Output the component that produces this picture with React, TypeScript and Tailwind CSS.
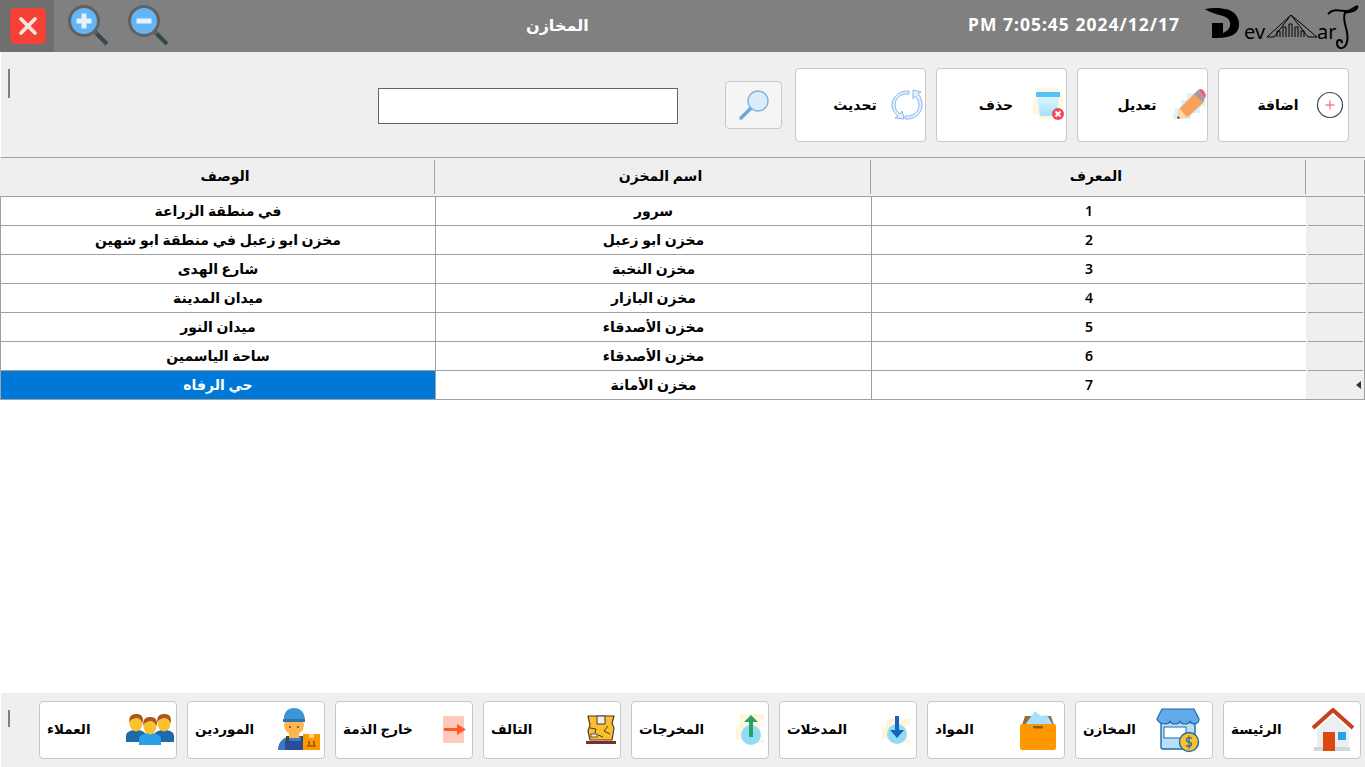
import type { ReactNode } from 'react';
import { X } from 'lucide-react';

const rows = [
  { id: 1, name: 'سرور', desc: 'في منطقة الزراعة' },
  { id: 2, name: 'مخزن ابو زعبل', desc: 'مخزن ابو زعبل في منطقة ابو شهين' },
  { id: 3, name: 'مخزن النخبة', desc: 'شارع الهدى' },
  { id: 4, name: 'مخزن البازار', desc: 'ميدان المدينة' },
  { id: 5, name: 'مخزن الأصدقاء', desc: 'ميدان النور' },
  { id: 6, name: 'مخزن الأصدقاء', desc: 'ساحة الياسمين' },
  { id: 7, name: 'مخزن الأمانة', desc: 'حي الرفاه' },
];

const ZoomIcon = ({ minus }: { minus?: boolean }) => (
  <svg width="42" height="42" viewBox="0 0 42 42">
    <line x1="27" y1="27" x2="39" y2="39" stroke="#37474f" strokeWidth="4" />
    <line x1="25" y1="25" x2="29" y2="29" stroke="#616161" strokeWidth="3" />
    <circle cx="16" cy="16" r="14.5" fill="#64b5f6" stroke="#616161" strokeWidth="3" />
    <rect x="8.5" y="13.5" width="15" height="5" fill="#e3f2fd" />
    {!minus && <rect x="13.5" y="8.5" width="5" height="15" fill="#e3f2fd" />}
  </svg>
);

const Logo = () => (
  <div className="relative h-[52px] w-[160px] shrink-0 text-black" dir="ltr">
    <svg width="160" height="52" viewBox="0 0 160 52" className="absolute inset-0">
      <path d="M0 9 C12 7 26 8 31 15 C36 22 35 31 28 35 C22 38 14 38 7 38 L7 23 L18 23 L18 33 C24 31 27 25 24 20 C20 14 10 16 0 9 Z" fill="#000" />
      <path d="M62 37 H69 L86 15 L103 37 H112 L86 15 L62 37" fill="none" stroke="#000" strokeWidth="1" />
      <path d="M72 37 V31 H75 V37 M78 37 V27 H81 V37 M84 37 V24 H87 V37 M90 37 V27 H93 V37 M96 37 V31 H99 V37" fill="none" stroke="#000" strokeWidth="1" />
      <path d="M123 14 C130 7 137 12 143 11 C148 10 154 3 152 8 C150 12 143 12 140 13 C136 22 145 30 142 42 C140 50 132 50 132 43 C132 39 137 39 137 43" fill="none" stroke="#000" strokeWidth="2" />
    </svg>
    <span className="absolute left-[39px] top-[22px] text-[20px] font-normal leading-none">ev</span>
    <span className="absolute left-[112px] top-[22px] text-[20px] font-normal leading-none">ar</span>
  </div>
);

const PlusCircleIcon = () => (
  <svg width="28" height="28" viewBox="0 0 28 28">
    <circle cx="14" cy="14" r="12.5" fill="none" stroke="#3c4454" strokeWidth="1.2" />
    <path d="M14 9.5 V18.5 M9.5 14 H18.5" stroke="#f77f8e" strokeWidth="1.4" />
  </svg>
);

const PencilIcon = () => (
  <svg width="34" height="34" viewBox="0 0 34 34">
    <path d="M3 20 H9 V12 H15 V5 H28 V2 H33 V18 H28 V25 H19 V31 H1 V26 H3 Z" fill="#d8f3fb" />
    <path d="M8 20 L23 5 L32 14 L16 29 L5 31 Z" fill="#f9a05c" />
    <path d="M26 2 Q29 0 31 2 L33 5 Q35 8 33 10 L26 2 Z" fill="#ef5f77" />
    <path d="M22 6 L26 2 L33 10 L31 14 Z" fill="#9e9e9e" />
    <path d="M5 31 L8 21 L15 29 Z" fill="#fcd9a4" />
    <path d="M5 31 L6 28 L8 30 Z" fill="#444" />
  </svg>
);

const TrashIcon = () => (
  <svg width="32" height="36" viewBox="0 0 32 36">
    <path d="M5 1 H26 V8 H31 V24 H27 V32 H7 V28 H1 V10 H5 Z" fill="#fff6df" />
    <path d="M5 8 H27 L25 29 H8 Z" fill="url(#trashFill)" />
    <rect x="4" y="5" width="24" height="5" fill="#4fc3f7" />
    <circle cx="26" cy="27" r="6" fill="#f0475e" />
    <path d="M23.5 24.5 L28.5 29.5 M28.5 24.5 L23.5 29.5" stroke="#fff" strokeWidth="1.8" />
    <defs>
      <linearGradient id="trashFill" x1="0" y1="0" x2="0" y2="1">
        <stop offset="0" stopColor="#e3f6fe" />
        <stop offset="1" stopColor="#a5e2fb" />
      </linearGradient>
    </defs>
  </svg>
);

const RefreshIcon = () => (
  <svg width="32" height="32" viewBox="0 0 32 32" fill="#e3f1fc" stroke="#86b7e6" strokeWidth="1">
    <path d="M18 2 L18 5 C10 4 4 9 4 16 C4 20 6 23 9 25 L11 22 L13 30 L4 29 L7 27 C3 24 1 20 1 16 C1 8 9 1 18 2 Z" />
    <path d="M22 1 L30 3 L27 5 C30 8 31 12 31 16 C31 24 24 31 14 30 L14 27 C22 28 28 23 28 16 C28 12 26 9 24 7 L22 10 Z" />
  </svg>
);

const SearchIcon = () => (
  <svg width="32" height="32" viewBox="0 0 32 32">
    <line x1="3" y1="29" x2="13" y2="19" stroke="#6fa8dc" strokeWidth="3.6" strokeLinecap="round" />
    <circle cx="20" cy="12" r="10" fill="#dcecfb" stroke="#7fb2e5" strokeWidth="1.4" />
  </svg>
);

const HomeIcon = () => (
  <svg width="44" height="44" viewBox="0 0 44 44">
    <path d="M6 22 L22 7 L38 22 V41 H6 Z" fill="#eceff1" />
    <rect x="3" y="39" width="36" height="4" fill="#cfd8dc" />
    <path d="M2 20 L22 2 L42 20" fill="none" stroke="#c6421a" strokeWidth="4" />
    <rect x="12" y="24" width="12" height="19" fill="#dd4a10" />
    <rect x="27" y="24" width="8" height="8" fill="#29a0e0" />
  </svg>
);

const StoreIcon = () => (
  <svg width="44" height="46" viewBox="0 0 44 46">
    <rect x="5" y="14" width="34" height="28" rx="2" fill="#bbdefb" stroke="#1c6ca8" strokeWidth="1.4" />
    <rect x="8" y="20" width="22" height="11" fill="#fff" stroke="#1c6ca8" strokeWidth="1" />
    <path d="M6 2 H38 L43 12 C43 18 35 18 34 14 C33 18 25 18 24 14 C23 18 15 18 14 14 C13 18 3 18 1 12 Z" fill="#64a9ea" stroke="#1c6ca8" strokeWidth="1.2" />
    <circle cx="33" cy="35" r="9.5" fill="#fbc02d" stroke="#1c6ca8" strokeWidth="1.4" />
    <path d="M36 31.5 Q33 29.5 30.5 32 Q30 34.5 33 35 Q36 35.5 35.5 38 Q33 40.5 30 38.5 M33 28.5 V41.5" fill="none" stroke="#1c6ca8" strokeWidth="1.2" />
  </svg>
);

const BoxIcon = () => (
  <svg width="36" height="40" viewBox="0 0 36 40">
    <path d="M2 15 L5 6 H31 L34 15 Z" fill="#8d6e3f" />
    <path d="M5 15 L15 1 L21 6 L27 5 L33 15 Z" fill="#a8e0fb" />
    <rect x="0" y="14" width="36" height="26" rx="2" fill="#ff9800" />
    <rect x="13" y="16" width="10" height="2.5" rx="1" fill="#8d5a1c" />
  </svg>
);

const InIcon = () => (
  <svg width="32" height="34" viewBox="0 0 32 34">
    <path d="M6 6 H30 V12 H26 V26 H30 V30 H12 V26 H2 V14 H6 Z" fill="#fff5dc" />
    <circle cx="17" cy="21" r="10" fill="#90dcf5" />
    <path d="M15 3 H19 V17 H24 L17 25 L10 17 H15 Z" fill="#1565c0" />
  </svg>
);

const OutIcon = () => (
  <svg width="32" height="34" viewBox="0 0 32 34">
    <path d="M6 1 H30 V8 H26 V26 H30 V30 H12 V26 H2 V14 H6 Z" fill="#fff5dc" />
    <circle cx="17" cy="22" r="10" fill="#90dcf5" />
    <path d="M15 24 V9 H10 L17 2 L24 9 H19 V24 Z" fill="#26a269" />
  </svg>
);

const DamagedIcon = () => (
  <svg width="30" height="30" viewBox="0 0 30 30">
    <path d="M2 1 H28 L26 8 L28 13 L26 25 H4 L2 16 L4 10 Z" fill="#fbc02d" stroke="#4e3a2a" strokeWidth="1.2" />
    <rect x="11" y="1" width="8" height="8" fill="#eee" stroke="#4e3a2a" strokeWidth="1" />
    <path d="M4 13 L10 14 L9 18 M22 11 L18 16 L24 19 M12 20 L17 22" fill="none" stroke="#4e3a2a" strokeWidth="1" />
    <rect x="5" y="19" width="6" height="3" fill="#eee" stroke="#4e3a2a" strokeWidth="0.8" />
    <rect x="0" y="26" width="30" height="3" fill="#7a2e2e" />
  </svg>
);

const ExitIcon = () => (
  <svg width="24" height="28" viewBox="0 0 24 28">
    <rect x="0" y="0" width="21" height="27" rx="1.5" fill="#ffc9bb" />
    <path d="M1 12 H14 V8 L23 13.5 L14 19 V15 H1 Z" fill="#ff5a26" />
  </svg>
);

const SupplierIcon = () => (
  <svg width="42" height="44" viewBox="0 0 42 44">
    <path d="M0 42 C0 33 6 30 11 28 H23 C28 30 32 33 33 42 Z" fill="#3878c4" />
    <rect x="7" y="33" width="20" height="9" fill="#2b4c9b" />
    <rect x="8" y="28" width="3" height="7" fill="#37474f" />
    <rect x="23" y="28" width="3" height="7" fill="#37474f" />
    <circle cx="16" cy="17" r="10" fill="#ffb74d" />
    <rect x="11" y="25" width="10" height="5" fill="#ffb74d" />
    <path d="M6 13 C5 4 10 0 16 0 C23 0 27 5 27 13 Z" fill="#3d95d9" />
    <rect x="5" y="11" width="22" height="3" fill="#2a74b5" />
    <circle cx="12" cy="19" r="1" fill="#5d4037" />
    <circle cx="20" cy="19" r="1" fill="#5d4037" />
    <rect x="25" y="26" width="17" height="16" fill="#ff9800" />
    <rect x="31" y="26" width="5" height="4" fill="#ffcc80" />
    <path d="M29 38 H38 M31 33 V37 M36 33 V37" stroke="#5d3a00" strokeWidth="1.2" />
  </svg>
);

const Person = ({ x, y, body, w }: { x: number; y: number; body: string; w: number }) => (
  <g transform={`translate(${x} ${y})`}>
    <path d={`M${-w} 24 V18 C${-w} 14 -6 13 -3 12 H3 C6 13 ${w} 14 ${w} 18 V24 Z`} fill={body} />
    <ellipse cx="0" cy="5" rx="6.5" ry="8.5" fill="#fbc02d" />
    <path d="M-6.5 5 C-8 -3 -3 -4 1 -4 C6 -4 8 0 6.5 5 C5 1 2 0 0 0 C-3 1 -6 1 -6.5 5 Z" fill="#a8571e" />
  </g>
);

const CustomersIcon = () => (
  <svg width="48" height="34" viewBox="0 0 48 34">
    <Person x={10} y={5} body="#1c6aa8" w={10} />
    <Person x={38} y={5} body="#1c6aa8" w={10} />
    <Person x={24} y={8} body="#29a0e8" w={11} />
  </svg>
);

function ActionButton({ label, icon }: { label: string; icon: ReactNode }) {
  return (
    <button className="flex h-[74px] w-[131px] items-center rounded border border-[#c8c8c8] bg-white text-[14px] font-bold text-black">
      <span className="mb-[2px] ml-[24px] w-[70px] text-center">{label}</span>
      <span className="flex w-[34px] justify-center">{icon}</span>
    </button>
  );
}

function NavButton({ label, icon, iconClass }: { label: string; icon: ReactNode; iconClass: string }) {
  return (
    <button className="flex h-[58px] w-[138px] items-center justify-between rounded border border-[#c8c8c8] bg-white pb-[1px] pl-[7px] text-[13.5px] font-bold text-black">
      <span>{label}</span>
      <span className={`flex ${iconClass}`}>{icon}</span>
    </button>
  );
}

export default function App() {
  return (
    <div className="flex h-[767px] w-[1365px] flex-col overflow-hidden bg-white [font-family:'Noto_Sans','DejaVu_Sans',sans-serif]">
      {/* Title bar */}
      <header className="flex h-[52px] shrink-0 items-center bg-[#808080]">
        <div className="flex h-full w-[54px] items-center justify-center bg-[#6f6f6f]">
          <div className="ml-[2px] flex h-9 w-9 items-center justify-center rounded-[5px] bg-[#f44336]">
            <X className="h-7 w-7 text-[#fde4e2]" strokeWidth={3.2} />
          </div>
        </div>
        <div className="ml-[14px] flex gap-[18px]">
          <ZoomIcon />
          <ZoomIcon minus />
        </div>
        <h1 className="mb-[3px] ml-[356px] w-[62px] text-center text-[16px] font-bold text-white">المخازن</h1>
        <div dir="ltr" className="mb-[4px] ml-auto mr-[25px] text-[17.5px] font-bold tracking-[1px] text-white">
          PM 7:05:45 2024/12/17
        </div>
        <Logo />
      </header>

      {/* Toolbar */}
      <div className="flex h-[106px] shrink-0 items-start border-b border-l border-[#a0a0a0] border-l-white bg-[#efefef] pr-[16px] pt-[16px]">
        <div className="ml-[7px] mt-[1px] h-[29px] w-[2px] bg-[#808080]" />
        <div className="ml-auto flex h-[74px] items-center">
          <input className="mt-[2px] h-[36px] w-[300px] border border-[#646464] bg-white" />
          <button className="ml-[47px] flex h-[48px] w-[57px] items-center justify-center rounded border border-[#c8c8c8] bg-[#f5f5f5]">
            <SearchIcon />
          </button>
          <div className="ml-[13px] flex gap-[10px]">
            <ActionButton label="تحديث" icon={<RefreshIcon />} />
            <ActionButton label="حذف" icon={<TrashIcon />} />
            <ActionButton label="تعديل" icon={<PencilIcon />} />
            <ActionButton label="اضافة" icon={<PlusCircleIcon />} />
          </div>
        </div>
      </div>

      {/* Table */}
      <main className="flex-1 text-[14px] font-bold text-black">
        <div className="grid h-[39px] grid-cols-[435px_436px_435px_59px] border-b border-[#a0a0a0] bg-[#efefef]">
          {['الوصف', 'اسم المخزن', 'المعرف'].map((title) => (
            <div key={title} className="my-[2px] flex items-center justify-center border-r border-[#a0a0a0] pb-[4px] pl-[16px]">
              {title}
            </div>
          ))}
          <div className="my-[2px] border-r border-[#a0a0a0]" />
        </div>
        {rows.map((row, i) => (
          <div key={row.id} className="grid h-[29px] grid-cols-[436px_436px_434px_59px]">
            <div className={`flex items-center justify-center border-x border-b border-[#a0a0a0] pb-[2px] ${i === 6 ? 'bg-[#0078d7] text-white' : ''}`}>
              {row.desc}
            </div>
            <div className="flex items-center justify-center border-b border-r border-[#a0a0a0] pb-[2px]">{row.name}</div>
            <div className="flex items-center justify-center border-b border-[#a0a0a0] pb-[2px] font-semibold">{row.id}</div>
            <div className={`border-r border-[#a0a0a0] bg-[#efefef] ${i === 6 ? '' : 'pl-[2px] pr-[1px]'}`}>
              <div className="flex h-full items-center justify-end border-b border-[#a0a0a0] pr-[3px]">
                {i === 6 && <span className="h-0 w-0 border-y-[4px] border-r-[5px] border-y-transparent border-r-[#333]" />}
              </div>
            </div>
          </div>
        ))}
      </main>

      {/* Bottom navigation */}
      <footer className="flex h-[74px] shrink-0 items-center border-l border-white bg-[#efefef] pr-[4px]">
        <div className="mb-[23px] ml-[7px] h-[17px] w-[2px] bg-[#808080]" />
        <div className="ml-auto flex gap-[10px]">
          <NavButton label="العملاء" icon={<CustomersIcon />} iconClass="mr-[2px]" />
          <NavButton label="الموردين" icon={<SupplierIcon />} iconClass="mr-[4px]" />
          <NavButton label="خارج الذمة" icon={<ExitIcon />} iconClass="mr-[5px]" />
          <NavButton label="التالف" icon={<DamagedIcon />} iconClass="mr-[4px]" />
          <NavButton label="المخرجات" icon={<OutIcon />} iconClass="mr-[2px]" />
          <NavButton label="المدخلات" icon={<InIcon />} iconClass="mr-[4px]" />
          <NavButton label="المواد" icon={<BoxIcon />} iconClass="mr-[8px]" />
          <NavButton label="المخازن" icon={<StoreIcon />} iconClass="mr-[12px]" />
          <NavButton label="الرئيسة" icon={<HomeIcon />} iconClass="mr-[5px]" />
        </div>
      </footer>
    </div>
  );
}
